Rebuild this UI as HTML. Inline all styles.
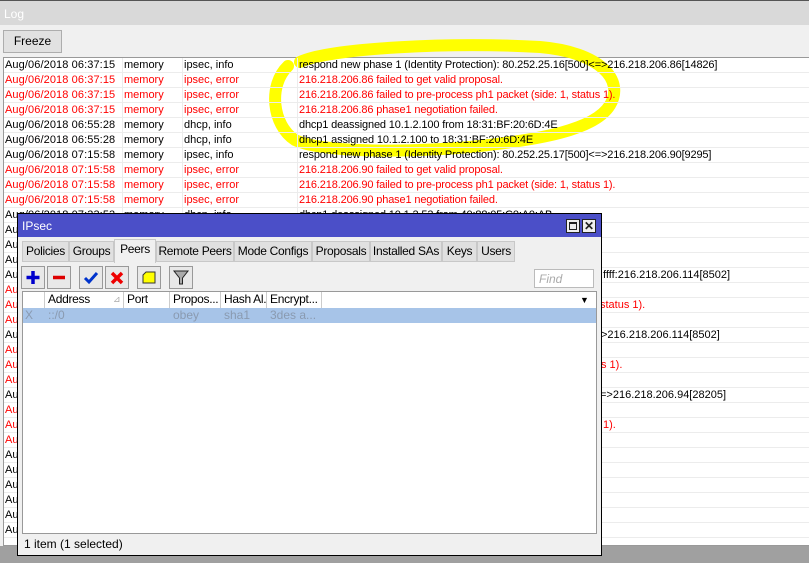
<!DOCTYPE html>
<html><head><meta charset="utf-8"><style>
*{margin:0;padding:0;box-sizing:border-box}
body{width:809px;height:563px;overflow:hidden;background:#f0f0f0;font-family:"Liberation Sans",sans-serif;font-size:11px;position:relative}
.abs{position:absolute}
#title{left:0;top:0;width:809px;height:25px;background:#d9d9d9;border-top:1px solid #555;color:#fff;padding:6px 4px;font-size:12px}
#freeze{left:3px;top:30px;width:59px;height:23px;background:#e1e1e1;border:1px solid #adadad;text-align:center;line-height:21px;font-size:12px}
#logbg{left:3px;top:57px;width:806px;height:489px;background:#fff;border:1px solid #999;border-right:none}
#log{left:4px;top:58px;width:805px;height:487px;overflow:hidden}
.r{position:absolute;left:0;height:15px;width:805px;border-bottom:1px solid #ececec;line-height:14px;white-space:nowrap}
.r span{position:absolute;top:0}
.c1{left:1px;letter-spacing:0.1px}.c2{left:120px}.c3{left:180px}.c4{left:295px;letter-spacing:-0.15px}
.red{color:#f00}
.vl{position:absolute;top:0;width:1px;height:489px;background:#ececec}
#bot{left:0;top:546px;width:809px;height:17px;background:#a0a0a0}
#win{left:17px;top:213px;width:585px;height:343px;background:#f0f0f0;border:1px solid #000}
#wt{left:0;top:0;width:583px;height:23px;background:#4b4fc8;color:#fff;padding:5px 4px;font-size:12px}
.tb{position:absolute;top:5px;width:14px;height:14px;background:#f0f0f0;border:1px solid #222}
.tab{position:absolute;top:27px;height:21px;background:#e0e0e0;border:1px solid #c8c8c8;line-height:19px;text-align:center;font-size:12px;letter-spacing:-0.3px}
.btn{position:absolute;top:52px;width:24px;height:23px;background:#e8e8e8;border:1px solid #999}
#list{left:4px;top:77px;width:575px;height:243px;background:#fff;border:1px solid #999}
.h{position:absolute;top:0;height:16px;border-right:1px solid #ccc;line-height:15px;padding-left:3px;background:#fff;white-space:nowrap;overflow:hidden;font-size:12px;letter-spacing:-0.3px}
#sel{left:0;top:16px;width:573px;height:15px;background:#a7c4e8;color:#8a9ab0;line-height:14px;font-size:12px}
#sel span{position:absolute;top:0}
</style></head><body>
<div id="title" class="abs">Log</div>
<div id="freeze" class="abs">Freeze</div>
<div id="logbg" class="abs"></div>
<svg class="abs" style="left:0;top:0" width="809" height="200"><path d="M300,62 C330,48 450,42 540,47 C600,52 625,80 610,105 C595,130 540,140 470,147 C400,153 320,152 295,140 C272,125 268,85 288,66" fill="none" stroke="#ffff00" stroke-width="12" stroke-linecap="round"/></svg>
<div id="log" class="abs">
<div class="vl" style="left:118px"></div><div class="vl" style="left:178px"></div><div class="vl" style="left:293px"></div>
<div class="r" style="top:0"><span class="c1">Aug/06/2018 06:37:15</span><span class="c2">memory</span><span class="c3">ipsec, info</span><span class="c4">respond new phase 1 (Identity Protection): 80.252.25.16[500]&lt;=&gt;216.218.206.86[14826]</span></div>
<div class="r red" style="top:15px"><span class="c1">Aug/06/2018 06:37:15</span><span class="c2">memory</span><span class="c3">ipsec, error</span><span class="c4">216.218.206.86 failed to get valid proposal.</span></div>
<div class="r red" style="top:30px"><span class="c1">Aug/06/2018 06:37:15</span><span class="c2">memory</span><span class="c3">ipsec, error</span><span class="c4">216.218.206.86 failed to pre-process ph1 packet (side: 1, status 1).</span></div>
<div class="r red" style="top:45px"><span class="c1">Aug/06/2018 06:37:15</span><span class="c2">memory</span><span class="c3">ipsec, error</span><span class="c4">216.218.206.86 phase1 negotiation failed.</span></div>
<div class="r" style="top:60px"><span class="c1">Aug/06/2018 06:55:28</span><span class="c2">memory</span><span class="c3">dhcp, info</span><span class="c4">dhcp1 deassigned 10.1.2.100 from 18:31:BF:20:6D:4E</span></div>
<div class="r" style="top:75px"><span class="c1">Aug/06/2018 06:55:28</span><span class="c2">memory</span><span class="c3">dhcp, info</span><span class="c4">dhcp1 assigned 10.1.2.100 to 18:31:BF:20:6D:4E</span></div>
<div class="r" style="top:90px"><span class="c1">Aug/06/2018 07:15:58</span><span class="c2">memory</span><span class="c3">ipsec, info</span><span class="c4">respond new phase 1 (Identity Protection): 80.252.25.17[500]&lt;=&gt;216.218.206.90[9295]</span></div>
<div class="r red" style="top:105px"><span class="c1">Aug/06/2018 07:15:58</span><span class="c2">memory</span><span class="c3">ipsec, error</span><span class="c4">216.218.206.90 failed to get valid proposal.</span></div>
<div class="r red" style="top:120px"><span class="c1">Aug/06/2018 07:15:58</span><span class="c2">memory</span><span class="c3">ipsec, error</span><span class="c4">216.218.206.90 failed to pre-process ph1 packet (side: 1, status 1).</span></div>
<div class="r red" style="top:135px"><span class="c1">Aug/06/2018 07:15:58</span><span class="c2">memory</span><span class="c3">ipsec, error</span><span class="c4">216.218.206.90 phase1 negotiation failed.</span></div>
<div class="r" style="top:150px"><span class="c1">Aug/06/2018 07:33:53</span><span class="c2">memory</span><span class="c3">dhcp, info</span><span class="c4">dhcp1 deassigned 10.1.2.53 from 40:88:05:C0:A0:AB</span></div>
<div class="r" style="top:165px"><span class="c1">Aug</span></div>
<div class="r" style="top:180px"><span class="c1">Aug</span></div>
<div class="r" style="top:195px"><span class="c1">Aug</span></div>
<div class="r" style="top:210px"><span class="c1">Aug</span><span style="left:596px">:ffff:216.218.206.114[8502]</span></div>
<div class="r red" style="top:225px"><span class="c1">Aug</span></div>
<div class="r red" style="top:240px"><span class="c1">Aug</span><span style="left:596px">status 1).</span></div>
<div class="r red" style="top:255px"><span class="c1">Aug</span></div>
<div class="r" style="top:270px"><span class="c1">Aug</span><span style="left:597px">&gt;216.218.206.114[8502]</span></div>
<div class="r red" style="top:285px"><span class="c1">Aug</span></div>
<div class="r red" style="top:300px"><span class="c1">Aug</span><span style="left:597px">s 1).</span></div>
<div class="r red" style="top:315px"><span class="c1">Aug</span></div>
<div class="r" style="top:330px"><span class="c1">Aug</span><span style="left:596px">=&gt;216.218.206.94[28205]</span></div>
<div class="r red" style="top:345px"><span class="c1">Aug</span></div>
<div class="r red" style="top:360px"><span class="c1">Aug</span><span style="left:599px">1).</span></div>
<div class="r red" style="top:375px"><span class="c1">Aug</span></div>
<div class="r" style="top:390px"><span class="c1">Aug</span></div>
<div class="r" style="top:405px"><span class="c1">Aug</span></div>
<div class="r" style="top:420px"><span class="c1">Aug</span></div>
<div class="r" style="top:435px"><span class="c1">Aug</span></div>
<div class="r" style="top:450px"><span class="c1">Aug</span></div>
<div class="r" style="top:465px"><span class="c1">Aug</span></div>
</div>
<div id="bot" class="abs"></div>
<div id="win" class="abs">
<div id="wt" class="abs">IPsec
<div class="tb" style="left:548px"><div style="position:absolute;left:2px;top:2px;width:8px;height:8px;border:1px solid #222;border-top-width:2px"></div></div>
<div class="tb" style="left:564px;font-weight:bold;color:#222;font-size:12px;line-height:12px;text-align:center">✕</div>
</div>
<div class="tab" style="left:4px;width:47px">Policies</div>
<div class="tab" style="left:51px;width:45px">Groups</div>
<div class="tab" style="left:96px;width:42px;top:25px;height:24px;background:#f0f0f0;border-bottom:none">Peers</div>
<div class="tab" style="left:138px;width:78px">Remote Peers</div>
<div class="tab" style="left:216px;width:78px">Mode Configs</div>
<div class="tab" style="left:294px;width:58px">Proposals</div>
<div class="tab" style="left:352px;width:72px">Installed SAs</div>
<div class="tab" style="left:424px;width:35px">Keys</div>
<div class="tab" style="left:459px;width:38px">Users</div>
<div class="btn" style="left:3px"><svg width="22" height="21"><path d="M11,4V17M4.5,10.5H17.5" stroke="#00c" stroke-width="3.5"/></svg></div>
<div class="btn" style="left:29px"><svg width="22" height="21"><path d="M5,10.5H17" stroke="#d00" stroke-width="3.5"/></svg></div>
<div class="btn" style="left:61px"><svg width="22" height="21"><path d="M5,11L9,15L17,6" fill="none" stroke="#0033cc" stroke-width="3"/></svg></div>
<div class="btn" style="left:87px"><svg width="22" height="21"><path d="M6,6L16,16M16,6L6,16" stroke="#e00" stroke-width="3.5"/></svg></div>
<div class="btn" style="left:119px"><svg width="22" height="21"><path d="M5,8L8,5H17V16H5Z" fill="#ff0" stroke="#333"/></svg></div>
<div class="btn" style="left:151px"><svg width="22" height="21"><path d="M4,4H18L12.5,11V17H9.5V11Z" fill="#aaa" stroke="#222"/></svg></div>
<div class="abs" style="left:516px;top:55px;width:60px;height:19px;background:#fff;border:1px solid #bbb;color:#aaa;font-style:italic;padding:2px 4px;font-size:12px">Find</div>
<div id="list" class="abs">
<div class="h" style="left:0;width:22px"></div>
<div class="h" style="left:22px;width:79px">Address<span style="position:absolute;left:68px;color:#aaa;font-size:9px">⊿</span></div>
<div class="h" style="left:101px;width:46px">Port</div>
<div class="h" style="left:147px;width:51px">Propos...</div>
<div class="h" style="left:198px;width:46px">Hash Al...</div>
<div class="h" style="left:244px;width:55px">Encrypt...</div>
<div class="abs" style="left:557px;top:3px;font-size:9px">▼</div>
<div id="sel" class="abs"><span style="left:2px">X</span><span style="left:25px">::/0</span><span style="left:150px">obey</span><span style="left:201px">sha1</span><span style="left:247px">3des a...</span></div>
</div>
<div class="abs" style="left:6px;top:323px;font-size:12px">1 item (1 selected)</div>
</div>
</body></html>
